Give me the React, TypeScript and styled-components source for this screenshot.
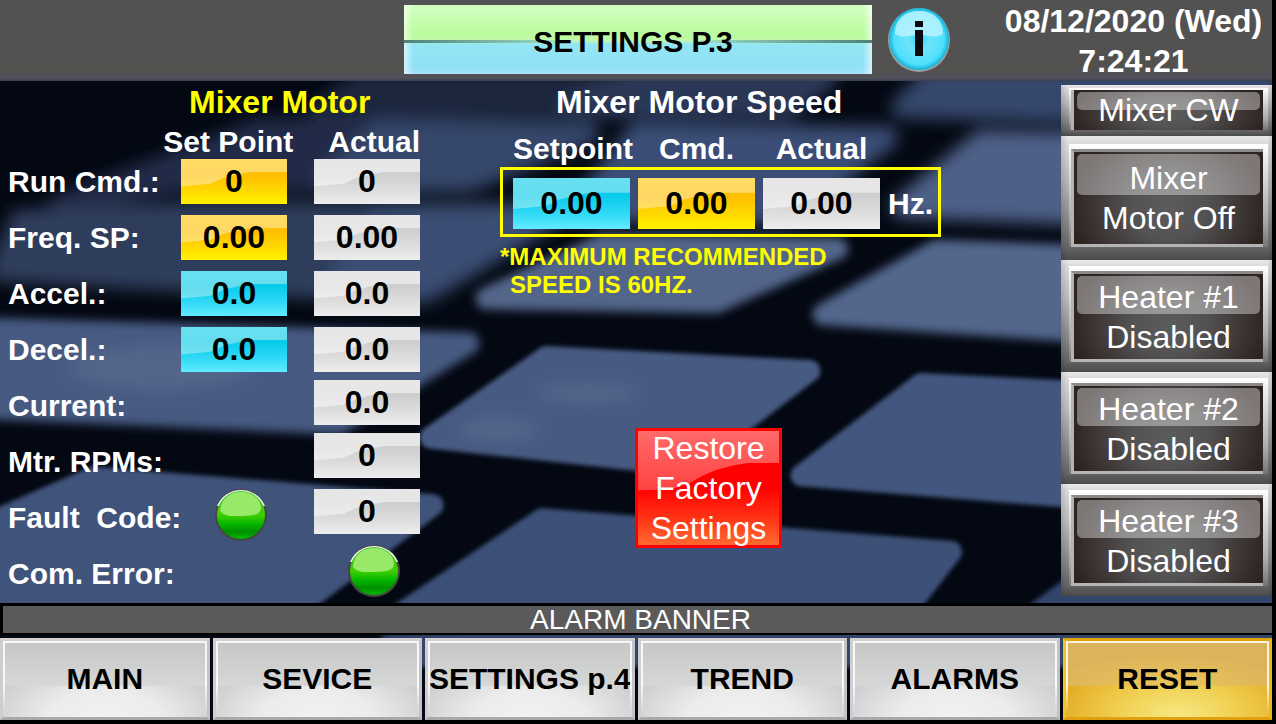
import React from 'react';
import styled, { createGlobalStyle, css } from 'styled-components';

const GlobalStyle = createGlobalStyle`
  *, *::before, *::after { box-sizing: border-box; }
  body {
    margin: 0;
    background: #000;
    font-family: "Liberation Sans", Arial, sans-serif;
    color: #fff;
  }
  h1, h2, h3, p { margin: 0; }
  button, input, output { font-family: inherit; }
`;

type Tone = 'amber' | 'cyan' | 'grey';

const tones: Record<Tone, string> = {
  amber: 'linear-gradient(#ffc800, #ffbe00 35%, #ffd800 70%, #fff200)',
  cyan: 'linear-gradient(#10d0ee, #08cbec 35%, #30daf6 70%, #62eaff)',
  grey: 'linear-gradient(#cccccc, #cfcfcf 35%, #dedede 70%, #ededed)',
};

const gloss: Record<Tone, string> = {
  amber: 'rgba(255, 240, 200, 0.5)',
  cyan: 'rgba(210, 245, 245, 0.45)',
  grey: 'rgba(255, 255, 255, 0.5)',
};

const Screen = styled.div`
  position: relative;
  isolation: isolate;
  display: flex;
  flex-direction: column;
  border-right: 4px solid #000;
  border-bottom: 4px solid #000;
`;

const Backdrop = styled.svg`
  position: absolute;
  inset: 0;
  width: 100%;
  height: 100%;
  z-index: -1;
`;

const Header = styled.header`
  display: flex;
  justify-content: flex-end;
  height: 81px;
  padding-top: 5px;
  background: linear-gradient(#525252 60%, #53514e 85%, #50505a 97%, #3c4252 99%);
`;

const PageTitle = styled.h1`
  flex: 0 1 468px;
  height: 69px;
  margin-right: 15px;
  padding: 2px 10px 0 0;
  font-size: 30px;
  line-height: 69px;
  text-align: center;
  white-space: nowrap;
  color: #000;
  background:
    linear-gradient(90deg, #4f8079, #8fd0bb 28%, transparent 36%, transparent 62%, #8fd0bb 68%, #4f8079) 0 35px / 100% 3px no-repeat,
    linear-gradient(90deg, rgba(255, 255, 255, 0.6), transparent 2%, transparent 98%, rgba(255, 255, 255, 0.6)),
    linear-gradient(#d2ffc0, #b9fb9c 45%, #c3f7ae 51%, #93e6f3 57%, #90e0f8 90%, #a8e4f8);
`;

const InfoButton = styled.button`
  flex: none;
  width: 64px;
  height: 68px;
  padding: 0;
  border: 0;
  background: none;
  svg { display: block; }
`;

const Clock = styled.time`
  flex: none;
  width: 277px;
  margin-left: 44px;
  margin-top: -4px;
  font-size: 32px;
  font-weight: bold;
  line-height: 40px;
  text-align: center;
  span { display: block; }
`;

const Main = styled.main`
  display: flex;
  min-height: 522px;
`;

const MotorPanel = styled.section`
  flex: none;
  width: 420px;
  padding: 0 0 6px 8px;
`;

const PanelTitle = styled.h2<{ $color?: string; $indent: number }>`
  padding-left: ${(p) => p.$indent}px;
  color: ${(p) => p.$color ?? '#fff'};
  font-size: 32px;
  line-height: 42px;
  white-space: nowrap;
`;

const MotorHeads = styled.div`
  display: flex;
  justify-content: flex-end;
  gap: 35px;
  font-size: 30px;
  font-weight: bold;
  line-height: 38px;
  height: 36px;
`;

const MotorColumns = styled.div`
  display: grid;
  grid-template-columns: 1fr 106px 106px;
  column-gap: 27px;
`;

const Labels = styled.div`
  display: grid;
  gap: 10px;
  width: 0;
  white-space: pre;
`;

const Label = styled.label`
  font-size: 30px;
  font-weight: bold;
  line-height: 46px;
`;

const ValueColumn = styled.div<{ $endAbove?: boolean }>`
  display: flex;
  flex-direction: column;
  justify-content: space-between;
  padding-bottom: ${(p) => (p.$endAbove ? 56 : 0)}px;
`;

const Stack = styled.div<{ $gap: number }>`
  display: grid;
  gap: ${(p) => p.$gap}px;
`;

const Cell = styled.div<{ $tone: Tone; $tall?: boolean }>`
  position: relative;
  isolation: isolate;
  height: ${(p) => (p.$tall ? 51 : 45)}px;
  background: ${(p) => tones[p.$tone]};

  &::before {
    content: '';
    position: absolute;
    inset: 0;
    z-index: -1;
    background: ${(p) => gloss[p.$tone]};
    clip-path: polygon(0 0, 100% 0, 100% 29%, 66% 29%, 52% 35%, 40% 42%, 28% 55%, 0 61%);
  }
`;

const valueText = css`
  display: block;
  width: 100%;
  height: 100%;
  padding: 0;
  border: 0;
  background: none;
  color: #000;
  font-size: 32px;
  font-weight: bold;
  text-align: center;
`;

const ValueOutput = styled.output<{ $tall?: boolean }>`
  ${valueText}
  line-height: ${(p) => (p.$tall ? 51 : 45)}px;
`;

const ValueInput = styled.input`
  ${valueText}
`;

const Lamp = styled.svg`
  display: block;
  width: 52px;
  height: 52px;
  margin-left: 34px;
`;

const SpeedPanel = styled.section`
  flex: 1;
  padding-left: 80px;
`;

const SpeedHeads = styled.div`
  display: grid;
  grid-template-columns: repeat(3, 117px);
  column-gap: 8px;
  padding: 8px 0 0 13px;
  font-size: 30px;
  font-weight: bold;
  line-height: 36px;
  text-align: center;
`;

const SpeedBox = styled.div`
  display: grid;
  grid-template-columns: repeat(3, 117px) 45px;
  column-gap: 8px;
  width: 441px;
  padding: 8px 0 5px 10px;
  border: 3px solid #ffff00;
`;

const Unit = styled.span`
  font-size: 30px;
  font-weight: bold;
  line-height: 51px;
`;

const Warning = styled.p`
  margin-top: 6px;
  padding-left: 10px;
  text-indent: -10px;
  color: #ffff00;
  font-size: 24px;
  font-weight: bold;
  line-height: 28px;
`;

const RestoreButton = styled.button`
  position: relative;
  isolation: isolate;
  display: flex;
  flex-direction: column;
  justify-content: center;
  align-items: center;
  width: 147px;
  height: 120px;
  margin: 129px 0 0 135px;
  padding: 0;
  border: 3px solid #ff0000;
  background: linear-gradient(#ff0000 50%, #ff2a12 72%, #ff6a30);
  color: #fff;
  font-size: 32px;
  line-height: 40px;

  &::before {
    content: '';
    position: absolute;
    inset: 0;
    z-index: -1;
    background: linear-gradient(rgba(255, 255, 255, 0.42), rgba(255, 255, 255, 0.26) 52%);
    clip-path: polygon(0 0, 100% 0, 100% 28%, 78% 28%, 68% 30%, 56% 34%, 46% 39%, 36% 46%, 24% 51%, 0 52%);
  }
`;

const Sidebar = styled.aside`
  display: flex;
  flex-direction: column;
  flex: none;
  width: 211px;
  padding-top: 4px;
`;

interface Bevel {
  top: number;
  rim: number;
  bottom: number;
  face: number;
}

const bevels: Record<'thin' | 'wide' | 'normal', Bevel> = {
  thin: { top: 3, rim: 2, bottom: 6, face: 40 },
  wide: { top: 8, rim: 8, bottom: 13, face: 95 },
  normal: { top: 6, rim: 8, bottom: 10, face: 88 },
};

const SideButton = styled.button<{ $bevel: Bevel }>`
  display: block;
  width: 100%;
  padding: ${(p) => p.$bevel.top}px 4px ${(p) => p.$bevel.bottom}px 8px;
  border: 0;
  background:
    linear-gradient(90deg, rgba(0, 0, 0, 0.12), transparent 3%, transparent 98%, rgba(0, 0, 0, 0.12)),
    linear-gradient(#e8e8e8, #dadada 6%, #b8b8b8 35%, #858585 70%, #646464 90%, #4a4a4a);
  color: #fff;
  font-size: 32px;
  line-height: 40px;
`;

const SideRim = styled.span<{ $bevel: Bevel }>`
  display: block;
  padding: ${(p) => Math.max(p.$bevel.rim - 3, 2)}px 5px 0 2px;
  background: linear-gradient(#ffffff, #e6e6e6 20%, #a8a8a8 75%, #747474);
`;

const SideFace = styled.span<{ $bevel: Bevel }>`
  position: relative;
  isolation: isolate;
  display: flex;
  flex-direction: column;
  justify-content: center;
  height: ${(p) => p.$bevel.face + (p.$bevel.rim > 3 ? 3 : 0)}px;
  border: solid #b4b4b4;
  border-top-color: #8b8989;
  border-width: ${(p) => (p.$bevel.rim > 3 ? '3px 0 3px 3px' : '0 0 0 3px')};
  background: radial-gradient(ellipse 52% 90% at 50% 60%, #5d5c5c, #535151 40%, #2d2321);

  &::before {
    content: '';
    position: absolute;
    inset: 2px 3px auto 3px;
    height: 45%;
    z-index: -1;
    border-radius: 5px;
    background: rgba(255, 255, 255, 0.38);
  }
`;

const AlarmBanner = styled.div`
  margin-bottom: 3px;
  padding-left: 6px;
  border: solid #000;
  border-width: 3px 0 2px 3px;
  background: #5a5a5a;
  font-size: 28px;
  line-height: 27px;
  text-align: center;
`;

const Nav = styled.nav`
  display: grid;
  grid-template-columns: repeat(6, minmax(0, 1fr));
  column-gap: 3px;
`;

const navFace = {
  plain: css`
    border-color: #d3cfd2 #c4c2c4 #a9a9a9 #d0cdd0;
    background:
      linear-gradient(#c6c6c6, #d6d7d7 100%) 0 0 / 100% 59% no-repeat,
      radial-gradient(ellipse 62% 90% at 50% 105%, #f2f2f2, #ececec 45%, #c9cacc);
  `,
  gold: css`
    border-color: #dfa400 #f0b414 #e0a010 #f2c41c;
    background:
      radial-gradient(ellipse 60% 70% at 50% 100%, #e9c658, #dcb35c) 0 0 / 100% 59% no-repeat,
      radial-gradient(ellipse 60% 90% at 55% 100%, #f7e985, #f0cf50 50%, #e4ac24);
  `,
};

const NavButton = styled.button<{ $kind: 'plain' | 'gold' }>`
  position: relative;
  height: 82px;
  padding: 0;
  border: 3px solid;
  ${(p) => navFace[p.$kind]}
  color: #000;
  font-size: 30px;
  font-weight: bold;
  white-space: nowrap;

  &::after {
    content: '';
    position: absolute;
    inset: 0;
    border: solid rgba(255, 255, 255, 0.85);
    border-width: 2px 2px 0 2px;
    mask: linear-gradient(#000 60%, transparent 95%);
  }
`;

interface Key {
  points: string;
  fill: string;
}

const farKeys: Key[] = [
  { points: '440,84 620,84 560,108 320,112 360,84', fill: '#1b263e' },
  { points: '640,78 830,78 790,108 570,108', fill: '#293957' },
  { points: '935,78 1276,78 1276,118 905,108', fill: '#34476c' },
  { points: '260,130 400,130 470,182 180,182 60,206', fill: '#202c46' },
  { points: '380,132 590,134 470,182 330,180', fill: '#34476b' },
  { points: '640,134 890,138 790,215 580,212', fill: '#3b4e76' },
  { points: '20,222 200,214 560,214 425,296 0,272', fill: '#2e3e5c' },
  { points: '380,222 550,218 430,284 340,282', fill: '#3b4e74' },
  { points: '985,142 1276,148 1276,222 905,208', fill: '#4d6188' },
];

const midKeys: Key[] = [
  { points: '-20,330 470,345 340,426 -20,410', fill: '#465a82' },
  { points: '605,246 840,250 718,304 488,300', fill: '#526589' },
  { points: '940,252 1276,264 1276,346 826,316', fill: '#53668c' },
];

const nearKeys: Key[] = [
  { points: '548,359 812,373 688,468 432,440', fill: '#465a82' },
  { points: '924,386 1276,404 1276,516 804,478', fill: '#42567f' },
  { points: '544,522 954,555 900,625 390,625', fill: '#3e5178' },
  { points: '1035,620 1130,550 1276,564 1276,660 1000,660', fill: '#33456a' },
  { points: '94,480 434,508 286,620 -20,610 -20,530', fill: '#3f527a' },
  { points: '390,649 1276,636 1276,660 390,660', fill: '#31446b' },
];

const Keys = ({ keys, filter }: { keys: Key[]; filter: string }) => (
  <g filter={`url(#${filter})`}>
    {keys.map((k) => (
      <polygon key={k.points} points={k.points} fill={k.fill} stroke={k.fill} strokeWidth={22} strokeLinejoin="round" />
    ))}
  </g>
);

const KeyboardBackdrop = () => (
  <Backdrop viewBox="0 0 1276 724" preserveAspectRatio="none" aria-hidden="true">
    <defs>
      <filter id="far"><feGaussianBlur stdDeviation="8" /></filter>
      <filter id="mid"><feGaussianBlur stdDeviation="5" /></filter>
      <filter id="near"><feGaussianBlur stdDeviation="2" /></filter>
      <filter id="soft"><feGaussianBlur stdDeviation="8" /></filter>
    </defs>
    <rect width="1276" height="724" fill="#030812" />
    <Keys keys={farKeys} filter="far" />
    <Keys keys={midKeys} filter="mid" />
    <Keys keys={nearKeys} filter="near" />
    <g filter="url(#soft)" fill="#6b7c9b" opacity="0.35">
      <ellipse cx="590" cy="395" rx="50" ry="10" />
      <ellipse cx="500" cy="432" rx="40" ry="12" />
      <ellipse cx="160" cy="370" rx="90" ry="22" />
    </g>
  </Backdrop>
);

const InfoIcon = () => (
  <svg width="64" height="68" viewBox="0 0 64 68" aria-hidden="true">
    <defs>
      <radialGradient id="infoBall" cx="50%" cy="50%" r="52%">
        <stop offset="0" stopColor="#2ad6f6" />
        <stop offset="0.35" stopColor="#6fe4fb" />
        <stop offset="0.8" stopColor="#4fdffc" />
        <stop offset="1" stopColor="#06a6cf" />
      </radialGradient>
    </defs>
    <ellipse cx="32" cy="35" rx="31" ry="32" fill="#b9c3c6" opacity="0.7" />
    <ellipse cx="32" cy="34" rx="30" ry="31" fill="url(#infoBall)" />
    <path d="M8 29C8 14 18 6 32 6s24 8 24 23C48 34 42 30 32 30S16 34 8 29Z" fill="#c4f5ff" opacity="0.75" />
    <rect x="28" y="16" width="8" height="6" fill="#0a0a10" />
    <rect x="28" y="25" width="8" height="26" fill="#0a0a10" />
  </svg>
);

const StatusLamp = ({ id, label }: { id: string; label: string }) => (
  <Lamp viewBox="0 0 52 52" role="img" aria-label={label}>
    <defs>
      <linearGradient id={id} x1="0" y1="0" x2="0" y2="1">
        <stop offset="0" stopColor="#3fc43a" />
        <stop offset="0.5" stopColor="#3fd000" />
        <stop offset="0.7" stopColor="#00b400" />
        <stop offset="0.85" stopColor="#008e00" />
        <stop offset="1" stopColor="#00b800" />
      </linearGradient>
    </defs>
    <circle cx="26" cy="26" r="26" fill="#45483e" />
    <path d="M2 17A26 26 0 0 1 50 17Z" fill="#f4f4f4" />
    <circle cx="26" cy="26" r="24" fill={`url(#${id})`} />
    <path d="M5 22C6 9 15 3 26 3s20 6 20 17c-2 7-10 6-19 7-9 0-17 1-22-5Z" fill="#98e86a" />
  </Lamp>
);

interface ValueProps {
  tone: Tone;
  value: string;
  name: string;
  id?: string;
  tall?: boolean;
}

const Value = ({ tone, value, name, id, tall }: ValueProps) => (
  <Cell $tone={tone} $tall={tall}>
    {tone === 'cyan' ? (
      <ValueInput id={id} aria-label={name} defaultValue={value} inputMode="decimal" />
    ) : (
      <ValueOutput id={id} aria-label={name} $tall={tall}>{value}</ValueOutput>
    )}
  </Cell>
);

const labels = [
  { text: 'Run Cmd.:', target: 'run' },
  { text: 'Freq. SP:', target: 'freq' },
  { text: 'Accel.:', target: 'accel' },
  { text: 'Decel.:', target: 'decel' },
  { text: 'Current:', target: 'current' },
  { text: 'Mtr. RPMs:', target: 'rpm' },
  { text: 'Fault  Code:', target: 'fault' },
  { text: 'Com. Error:', target: undefined },
];

const sideButtons: { lines: string[]; bevel: keyof typeof bevels }[] = [
  { lines: ['Mixer CW'], bevel: 'thin' },
  { lines: ['Mixer', 'Motor Off'], bevel: 'wide' },
  { lines: ['Heater #1', 'Disabled'], bevel: 'normal' },
  { lines: ['Heater #2', 'Disabled'], bevel: 'normal' },
  { lines: ['Heater #3', 'Disabled'], bevel: 'normal' },
];

const navItems = ['MAIN', 'SEVICE', 'SETTINGS p.4', 'TREND', 'ALARMS', 'RESET'];

export default function App() {
  return (
    <>
      <GlobalStyle />
      <Screen>
        <KeyboardBackdrop />
        <Header>
          <PageTitle>SETTINGS P.3</PageTitle>
          <InfoButton type="button" aria-label="Information"><InfoIcon /></InfoButton>
          <Clock dateTime="2020-08-12T07:24:21">
            <span>08/12/2020 (Wed)</span>
            <span>7:24:21</span>
          </Clock>
        </Header>

        <Main>
          <MotorPanel>
            <PanelTitle $color="#ffff00" $indent={181}>Mixer Motor</PanelTitle>
            <MotorHeads>
              <span>Set Point</span>
              <span>Actual</span>
            </MotorHeads>
            <MotorColumns>
              <Labels>
                {labels.map((l) => (
                  <Label key={l.text} htmlFor={l.target}>{l.text}</Label>
                ))}
              </Labels>
              <ValueColumn $endAbove>
                <Stack $gap={11}>
                  <Value id="run" tone="amber" value="0" name="Run command set point" />
                  <Value id="freq" tone="amber" value="0.00" name="Frequency set point" />
                  <Value id="accel" tone="cyan" value="0.0" name="Acceleration set point" />
                  <Value id="decel" tone="cyan" value="0.0" name="Deceleration set point" />
                </Stack>
                <StatusLamp id="faultLamp" label="No fault" />
              </ValueColumn>
              <ValueColumn>
                <Stack $gap={8}>
                  <Stack $gap={11}>
                    <Value tone="grey" value="0" name="Run command actual" />
                    <Value tone="grey" value="0.00" name="Frequency actual" />
                    <Value tone="grey" value="0.0" name="Acceleration actual" />
                    <Value tone="grey" value="0.0" name="Deceleration actual" />
                  </Stack>
                  <Value id="current" tone="grey" value="0.0" name="Current" />
                  <Value id="rpm" tone="grey" value="0" name="Motor RPMs" />
                </Stack>
                <Stack $gap={11}>
                  <Value id="fault" tone="grey" value="0" name="Fault code" />
                  <StatusLamp id="comLamp" label="No communication error" />
                </Stack>
              </ValueColumn>
            </MotorColumns>
          </MotorPanel>

          <SpeedPanel>
            <PanelTitle $indent={56}>Mixer Motor Speed</PanelTitle>
            <SpeedHeads>
              <span>Setpoint</span>
              <span>Cmd.</span>
              <span>Actual</span>
            </SpeedHeads>
            <SpeedBox>
              <Value tall tone="cyan" value="0.00" name="Speed setpoint" />
              <Value tall tone="amber" value="0.00" name="Speed command" />
              <Value tall tone="grey" value="0.00" name="Speed actual" />
              <Unit>Hz.</Unit>
            </SpeedBox>
            <Warning>
              *MAXIMUM RECOMMENDED<br />SPEED IS 60HZ.
            </Warning>
            <RestoreButton type="button">
              <span>Restore</span>
              <span>Factory</span>
              <span>Settings</span>
            </RestoreButton>
          </SpeedPanel>

          <Sidebar>
            {sideButtons.map(({ lines, bevel }) => (
              <SideButton key={lines.join(' ')} type="button" $bevel={bevels[bevel]}>
                <SideRim $bevel={bevels[bevel]}>
                  <SideFace $bevel={bevels[bevel]}>
                    {lines.map((line) => <span key={line}>{line}</span>)}
                  </SideFace>
                </SideRim>
              </SideButton>
            ))}
          </Sidebar>
        </Main>

        <AlarmBanner role="status">ALARM BANNER</AlarmBanner>

        <Nav>
          {navItems.map((item) => (
            <NavButton key={item} type="button" $kind={item === 'RESET' ? 'gold' : 'plain'}>{item}</NavButton>
          ))}
        </Nav>
      </Screen>
    </>
  );
}
